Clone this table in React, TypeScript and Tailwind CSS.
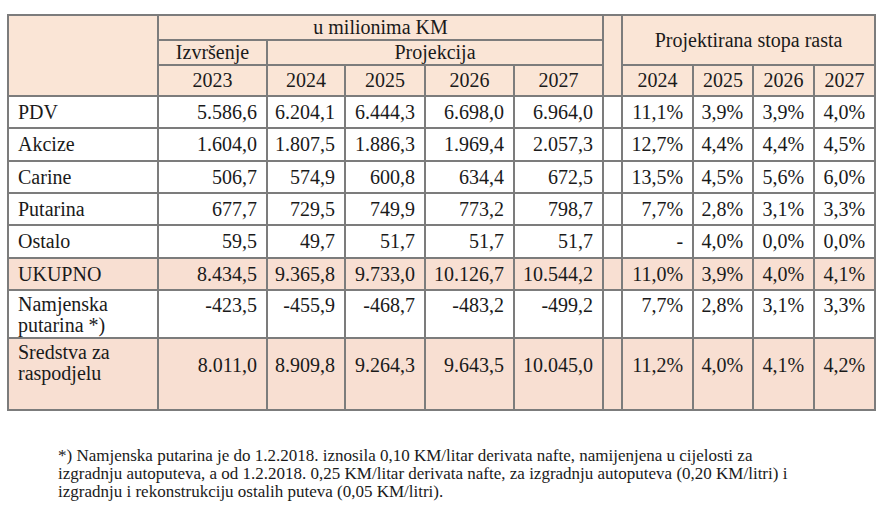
const cols = [150, 109, 78, 80, 89, 89, 19, 71, 60, 61, 61];

type Row = {
  label: string[];
  values: string[];
  rates: string[];
  shaded?: boolean;
  height: number;
  kind?: "two" | "tall";
};

const rows: Row[] = [
  { label: ["PDV"], values: ["5.586,6", "6.204,1", "6.444,3", "6.698,0", "6.964,0"], rates: ["11,1%", "3,9%", "3,9%", "4,0%"], height: 32 },
  { label: ["Akcize"], values: ["1.604,0", "1.807,5", "1.886,3", "1.969,4", "2.057,3"], rates: ["12,7%", "4,4%", "4,4%", "4,5%"], height: 33 },
  { label: ["Carine"], values: ["506,7", "574,9", "600,8", "634,4", "672,5"], rates: ["13,5%", "4,5%", "5,6%", "6,0%"], height: 32 },
  { label: ["Putarina"], values: ["677,7", "729,5", "749,9", "773,2", "798,7"], rates: ["7,7%", "2,8%", "3,1%", "3,3%"], height: 32 },
  { label: ["Ostalo"], values: ["59,5", "49,7", "51,7", "51,7", "51,7"], rates: ["-", "4,0%", "0,0%", "0,0%"], height: 33 },
  { label: ["UKUPNO"], values: ["8.434,5", "9.365,8", "9.733,0", "10.126,7", "10.544,2"], rates: ["11,0%", "3,9%", "4,0%", "4,1%"], shaded: true, height: 32 },
  { label: ["Namjenska", "putarina *)"], values: ["-423,5", "-455,9", "-468,7", "-483,2", "-499,2"], rates: ["7,7%", "2,8%", "3,1%", "3,3%"], height: 48, kind: "two" },
  { label: ["Sredstva za", "raspodjelu"], values: ["8.011,0", "8.909,8", "9.264,3", "9.643,5", "10.045,0"], rates: ["11,2%", "4,0%", "4,1%", "4,2%"], shaded: true, height: 72, kind: "tall" },
];

// times-like face for the whole sheet
const serif = "[font-family:Liberation_Serif,Times_New_Roman,serif]";
const cell = "border-2 border-[#7c7c7c] p-0";

function BodyRow({ row }: { row: Row }) {
  const bg = row.shaded ? "bg-[#f8dfd2]" : "bg-white";
  const align =
    row.kind === "two"
      ? "align-top pt-[3px]"
      : row.kind === "tall"
        ? "align-top pt-[15px]"
        : "align-middle";
  const labelAlign = row.kind ? "align-top pt-[3px]" : "align-middle";
  return (
    <tr style={{ height: row.height }} className={bg}>
      <td className={`${cell} ${labelAlign} pl-[9px] text-left leading-[21px]`}>
        {row.label.map((l) => (
          <div key={l}>{l}</div>
        ))}
      </td>
      {row.values.map((v, i) => (
        <td key={i} className={`${cell} ${align} pr-[9px] text-right`}>
          {v}
        </td>
      ))}
      <td className={cell}></td>
      {row.rates.map((r, i) => (
        <td key={i} className={`${cell} ${align} pr-[9px] text-right`}>
          {r}
        </td>
      ))}
    </tr>
  );
}

export default function App() {
  return (
    <div className={`h-[518px] w-[890px] overflow-hidden bg-white pl-[7px] pt-[14px] ${serif} text-[20px] leading-[23px] text-[#1a1a1a]`}>
      <table className="table-fixed border-collapse" style={{ width: 869 }}>
        <colgroup>
          {cols.map((w, i) => (
            <col key={i} style={{ width: w }} />
          ))}
        </colgroup>
        <thead className="bg-[#fae5d6]">
          <tr className="h-[25px]">
            <td rowSpan={3} className={cell}></td>
            <td colSpan={5} className={`${cell} text-center`}>
              u milionima KM
            </td>
            <td rowSpan={3} className={cell}></td>
            <td colSpan={4} rowSpan={2} className={`${cell} text-center`}>
              Projektirana stopa rasta
            </td>
          </tr>
          <tr className="h-[24px]">
            <td className={`${cell} text-center`}>Izvršenje</td>
            <td colSpan={4} className={`${cell} text-center`}>
              Projekcija
            </td>
          </tr>
          <tr className="h-[31px]">
            {["2023", "2024", "2025", "2026", "2027"].map((y) => (
              <td key={y} className={`${cell} text-center`}>
                {y}
              </td>
            ))}
            {["2024", "2025", "2026", "2027"].map((y) => (
              <td key={"r" + y} className={`${cell} text-center`}>
                {y}
              </td>
            ))}
          </tr>
        </thead>
        <tbody>
          {rows.map((r) => (
            <BodyRow key={r.label.join(" ")} row={r} />
          ))}
        </tbody>
      </table>

      <p className="mt-[36px] pl-[51px] text-[17px] leading-[18px] whitespace-nowrap">
        *) Namjenska putarina je do 1.2.2018. iznosila 0,10 KM/litar derivata nafte, namijenjena u cijelosti za
        <br />
        izgradnju autoputeva, a od 1.2.2018. 0,25 KM/litar derivata nafte, za izgradnju autoputeva (0,20 KM/litri) i
        <br />
        izgradnju i rekonstrukciju ostalih puteva (0,05 KM/litri).
      </p>
    </div>
  );
}
